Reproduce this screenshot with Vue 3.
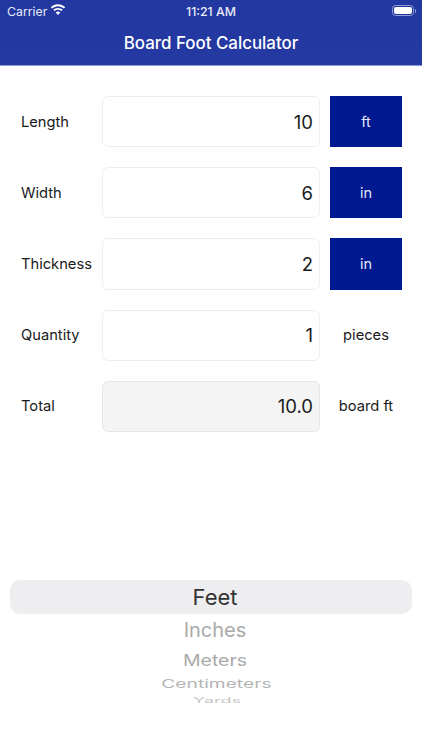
<script setup>
const rows = [
  { label: 'Length', value: '10', unit: 'ft', button: true },
  { label: 'Width', value: '6', unit: 'in', button: true },
  { label: 'Thickness', value: '2', unit: 'in', button: true },
  { label: 'Quantity', value: '1', unit: 'pieces' },
  { label: 'Total', value: '10.0', unit: 'board ft', readonly: true },
]
</script>

<template>
  <div class="screen">
    <header class="header">
      <div class="status">
        <div class="status-left">
          <span>Carrier</span>
          <svg class="wifi" viewBox="0 0 16 12" width="16" height="12">
            <path fill="#fff" d="M8 2.2c2.3 0 4.4.9 6 2.4l1.2-1.3C13.300 1.400 10.800.300 8 .300S2.700 1.400.800 3.300L2 4.600c1.600-1.500 3.700-2.400 6-2.400z"/>
            <path fill="#fff" d="M8 5.800c1.300 0 2.500.5 3.400 1.300l1.300-1.300C11.400 4.600 9.800 3.900 8 3.900s-3.400.7-4.700 1.900l1.300 1.300C5.500 6.300 6.700 5.800 8 5.800z"/>
            <path fill="#fff" d="M8 7.500c-.9 0-1.700.3-2.300.9L8 11l2.300-2.600c-.6-.6-1.400-.9-2.300-.9z"/>
          </svg>
        </div>
        <span class="time">11:21 AM</span>
        <div class="battery"><span class="battery-fill"></span></div>
      </div>
      <h1 class="title">Board Foot Calculator</h1>
    </header>

    <main class="form">
      <div v-for="row in rows" :key="row.label" class="row">
        <span class="label">{{ row.label }}</span>
        <div class="field" :class="{ readonly: row.readonly }">{{ row.value }}</div>
        <div class="unit" :class="{ 'unit-button': row.button }">{{ row.unit }}</div>
      </div>
    </main>

    <section class="picker">
      <div class="selected">Feet</div>
      <div class="opt inches">Inches</div>
      <div class="opt meters">Meters</div>
      <div class="opt centimeters">Centimeters</div>
      <div class="opt yards">Yards</div>
    </section>
  </div>
</template>

<style>
html, body { margin: 0; background: #fff; }
</style>

<style scoped>
.screen {
  width: 422px;
  height: 750px;
  overflow: hidden;
  background: #fff;
  font-family: Inter, "Liberation Sans", sans-serif;
  color: #1a1a1c;
  display: flex;
  flex-direction: column;
}
.header {
  height: 66px;
  box-sizing: border-box;
  background: linear-gradient(180deg, #2337a0, #2539a2);
  border-bottom: 1px solid #8a9ad8;
  color: #fff;
  flex: none;
}
.status {
  height: 22px;
  padding: 0 7px;
  display: flex;
  align-items: center;
  justify-content: space-between;
  position: relative;
  font-size: 12.300px;
  color: #e8ebf7;
}
.status-left { display: flex; align-items: center; gap: 5px; }
.wifi { margin-top: -1.500px; margin-left: -2px; }
.time {
  position: absolute;
  left: 0;
  right: 0;
  text-align: center;
  font-weight: 500;
}
.battery {
  position: relative;
  width: 22px;
  height: 11px;
  box-sizing: border-box;
  border: 1px solid #8f9bd4;
  border-radius: 3.500px;
  padding: 1px;
  margin-right: 1px;
  margin-top: -1px;
  display: flex;
}
.battery::after {
  content: "";
  position: absolute;
  right: -3px;
  top: 2.500px;
  width: 1.500px;
  height: 4px;
  border-radius: 0 1px 1px 0;
  background: #8f9bd4;
}
.battery-fill { flex: 1; background: #fff; border-radius: 2px; }
.title {
  margin: 0;
  padding-top: 10px;
  font-size: 16.900px;
  line-height: 22px;
  font-weight: 500;
  text-align: center;
}
.form {
  padding: 30px 20px 0 21px;
  display: flex;
  flex-direction: column;
  gap: 20px;
}
.row {
  display: grid;
  grid-template-columns: 71px 218px 72px;
  column-gap: 10px;
  height: 51.200px;
  align-items: stretch;
  font-size: 14.700px;
}
.label { align-self: center; white-space: nowrap; }
.field {
  box-sizing: border-box;
  border: 1px solid #eeeeef;
  border-radius: 6px;
  background: #fff;
  padding-right: 6px;
  font-size: 18.500px;
  display: flex;
  align-items: center;
  justify-content: flex-end;
}
.readonly { background: #f4f4f4; border-color: #e6e6e6; }
.unit {
  display: flex;
  align-items: center;
  justify-content: center;
  white-space: nowrap;
}
.unit-button { background: #001890; color: #e4e8f8; font-size: 14.500px; }
.picker {
  margin-top: 148.200px;
  display: flex;
  flex-direction: column;
  align-items: center;
}
.selected {
  width: 402px;
  height: 34px;
  box-sizing: border-box;
  padding-left: 8px;
  border-radius: 10px;
  background: #eeeef0;
  color: #333;
  text-align: center;
  font-size: 22px;
  line-height: 34px;
}
.opt { color: #aaa; text-align: center; white-space: nowrap; padding-left: 8px; }
.inches { font-size: 20px; line-height: 24px; margin-top: 4px; }
.meters { font-size: 19.500px; line-height: 22px; margin-top: 7px; transform: scaleY(.85); }
.centimeters { font-size: 15.500px; line-height: 18px; margin-top: 4px; transform: scale(1.24, .75); color: #b4b4b4; }
.yards { font-size: 12px; line-height: 12px; margin-top: 2px; transform: scale(1.5, .6); color: #c4c4c4; }
</style>
